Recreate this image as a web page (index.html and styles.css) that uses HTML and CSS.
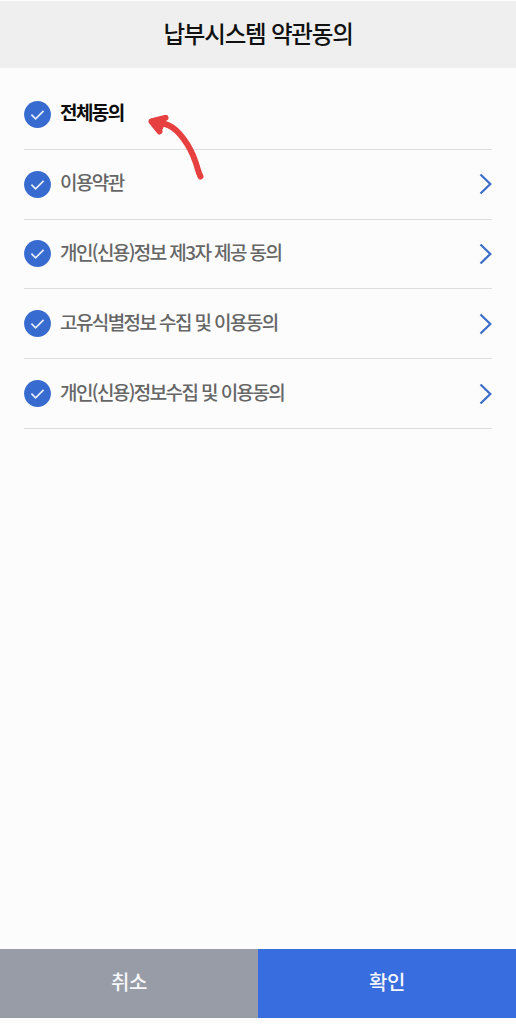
FILE: index.html
```html
<!DOCTYPE html>
<html lang="ko">
<head>
<meta charset="utf-8">
<title>납부시스템 약관동의</title>
<link rel="stylesheet" href="styles.css">
</head>
<body>
<svg class="defs" aria-hidden="true">
  <symbol id="check" viewBox="0 0 27 27">
    <circle cx="13.5" cy="13.5" r="13.4" fill="#386bcf"/>
    <path d="M7.4 13.6l4.2 4.2 8-8" fill="none" stroke="#e6edfb" stroke-width="1.7"/>
  </symbol>
  <symbol id="chevron" viewBox="0 0 13 22">
    <path d="M1.5 1.5l9.8 9.5-9.8 9.5" fill="none" stroke="#3d6fc8" stroke-width="2.3"/>
  </symbol>
</svg>
<div class="screen">
  <header class="header"><h1 class="title">납부시스템 약관동의</h1></header>
  <main class="content">
    <ul class="terms">
      <li class="term term-all"><svg class="check"><use href="#check"/></svg><span class="label">전체동의</span></li>
      <li class="term"><svg class="check"><use href="#check"/></svg><span class="label">이용약관</span><svg class="chevron"><use href="#chevron"/></svg></li>
      <li class="term"><svg class="check"><use href="#check"/></svg><span class="label">개인(신용)정보 제3자 제공 동의</span><svg class="chevron"><use href="#chevron"/></svg></li>
      <li class="term"><svg class="check"><use href="#check"/></svg><span class="label">고유식별정보 수집 및 이용동의</span><svg class="chevron"><use href="#chevron"/></svg></li>
      <li class="term"><svg class="check"><use href="#check"/></svg><span class="label">개인(신용)정보수집 및 이용동의</span><svg class="chevron"><use href="#chevron"/></svg></li>
    </ul>
    <svg class="arrow" viewBox="0 0 60 70" aria-hidden="true">
      <path d="M55.5 61.5C53 57 52.500 52 50 45.500C45 31 34 15 24 10.500C19 8 15 8 9 6"/>
      <path d="M20.500 2.800L6.500 6.500L14.500 16.500"/>
      <path d="M7 6.500L18 5L15 13Z"/>
    </svg>
  </main>
  <footer class="actions">
    <button class="button cancel">취소</button>
    <button class="button confirm">확인</button>
  </footer>
</div>
</body>
</html>
```
FILE: styles.css
```css
* { box-sizing: border-box; }
body {
  margin: 0;
  background: #fcfcfc;
  font-family: "Noto Sans CJK KR", sans-serif;
}
.defs { position: absolute; width: 0; height: 0; }
.screen {
  display: flex;
  flex-direction: column;
  height: 1024px;
  padding: 1px 0 6px;
}
.header {
  display: flex;
  align-items: center;
  justify-content: center;
  height: 67px;
  padding-bottom: 3px;
  background: #efefef;
}
.title {
  margin: 0;
  color: #111;
  font-size: 23.5px;
  font-weight: 500;
  line-height: 34px;
  letter-spacing: -1.2px;
}
.content { position: relative; flex: 1; padding: 12px 24px 0; }
.terms { margin: 0; padding: 0; list-style: none; }
.term {
  display: flex;
  align-items: center;
  height: 69.8px;
  border-bottom: 1px solid #dedede;
  color: #666;
  font-size: 19px;
  font-weight: 500;
  letter-spacing: -1.6px;
}
.term-all { color: #0c0c0c; font-weight: 700; }
.check { width: 27px; height: 27px; flex: none; }
.label { flex: 1; padding: 0 0 4px 9px; line-height: 28px; white-space: nowrap; }
.chevron { width: 13px; height: 22px; flex: none; }
.arrow {
  position: absolute;
  left: 145px;
  top: 47px;
  width: 60px;
  height: 70px;
  fill: none;
  stroke: #e64040;
  stroke-width: 6;
  stroke-linecap: round;
  stroke-linejoin: round;
}
.actions { display: flex; height: 69px; }
.button {
  flex: 1;
  padding: 0 0 3px;
  border: 0;
  color: #f6f7fa;
  font: 500 20px/30px "Noto Sans CJK KR", sans-serif;
  letter-spacing: -.5px;
}
.cancel { background: #989ca7; }
.confirm { background: #386de0; }
```
